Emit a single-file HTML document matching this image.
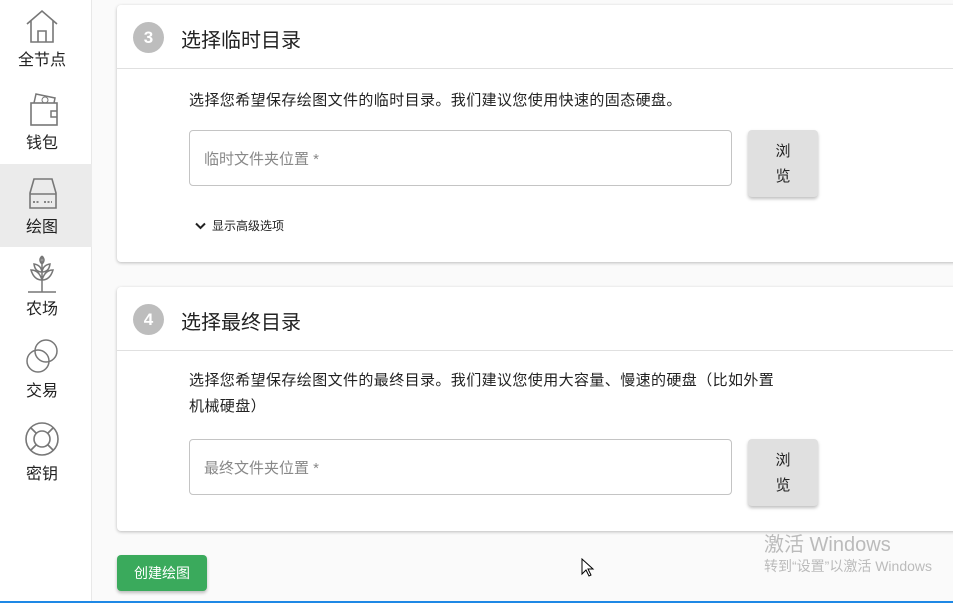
<!DOCTYPE html>
<html><head><meta charset="utf-8"><style>
*{margin:0;padding:0;box-sizing:border-box}
body{width:953px;height:603px;overflow:hidden;background:#fafafa;font-family:"Liberation Sans","Noto Sans CJK SC",sans-serif;color:#333;position:relative}
.side{position:absolute;left:0;top:0;width:92px;height:603px;background:#fff;border-right:1px solid #e8e8e8}
.item{position:absolute;left:0;width:92px;height:83px;text-align:center;font-size:16px;color:#222;padding-right:8px}
.item svg{display:block;margin:0 auto}
.item span{position:absolute;left:0;right:8px}
.card{position:absolute;left:117px;width:850px;background:#fff;border-radius:4px;box-shadow:0 1px 3px rgba(0,0,0,.25)}
.hd{height:64px;border-bottom:1px solid #e0e0e0;position:relative}
.num{position:absolute;left:16px;width:31px;height:31px;border-radius:50%;background:#bdbdbd;color:#fff;font-size:17px;text-align:center;line-height:31px;font-weight:bold}
.ttl{position:absolute;left:64px;font-size:20px;color:#222}
.desc{position:absolute;left:72px;font-size:15px;letter-spacing:0.4px;color:#222;line-height:26px;width:640px;white-space:nowrap}
.inp{position:absolute;left:72px;width:543px;height:56px;border:1px solid #c4c4c4;border-radius:4px;font-size:15px;color:#888;padding:17px 14px}
.btn{position:absolute;left:631px;width:70px;height:67px;background:#e0e0e0;border-radius:4px;box-shadow:0 2px 3px rgba(0,0,0,.25);font-size:15px;text-align:center;color:#222;line-height:25px;padding-top:9px}
</style></head><body>
<div class="side">
 <div class="item" style="top:0;"><svg width="40" height="42" viewBox="0 0 40 42" style="margin-top:4px"><path d="M5 20 L20 7 L35 20 M9 17 V38 H31 V17 M16 38 V27 H24 V38" fill="none" stroke="#777" stroke-width="1.6"/></svg><span style="top:46px">全节点</span></div>
 <div class="item" style="top:83px"><svg width="40" height="40" viewBox="0 0 40 40" style="margin-top:5px"><rect x="9" y="15" width="26" height="22" fill="none" stroke="#777" stroke-width="1.6"/><path d="M12 15 L14 6 L33 10 L32 15" fill="none" stroke="#777" stroke-width="1.5"/><circle cx="23" cy="12" r="3" fill="none" stroke="#777"/><path d="M35 23 H29 V29 H35" fill="none" stroke="#777" stroke-width="1.5"/></svg><span style="top:46px">钱包</span></div>
 <div class="item" style="top:164px;background:#ebebeb"><svg width="40" height="40" viewBox="0 0 40 40" style="margin-top:7px"><path d="M8 22 L12 8 H30 L34 22 V37 H8 Z M8 23 H34" fill="none" stroke="#777" stroke-width="1.6"/><path d="M11 31 H18 M22 31 H30" stroke="#777" stroke-width="1.8" stroke-dasharray="2 1.5"/></svg><span style="top:49px">绘图</span></div>
 <div class="item" style="top:247px"><svg width="40" height="44" viewBox="0 0 40 44" style="margin-top:5px"><path d="M20 40 V4 M20 4 Q24 8 20 12 Q16 8 20 4 M20 28 Q12 28 9 18 Q17 18 20 28 M20 28 Q28 28 31 18 Q23 18 20 28 M20 20 Q13 20 12 12 Q19 13 20 20 M20 20 Q27 20 28 12 Q21 13 20 20 M6 40 H34" fill="none" stroke="#777" stroke-width="1.5"/></svg><span style="top:48px">农场</span></div>
 <div class="item" style="top:331px"><svg width="40" height="40" viewBox="0 0 40 40" style="margin-top:5px"><circle cx="24" cy="15" r="11" fill="none" stroke="#777" stroke-width="1.5"/><circle cx="16" cy="25" r="11" fill="none" stroke="#777" stroke-width="1.5"/></svg><span style="top:46px">交易</span></div>
 <div class="item" style="top:414px"><svg width="40" height="40" viewBox="0 0 40 40" style="margin-top:5px"><circle cx="20" cy="20" r="16" fill="none" stroke="#777" stroke-width="1.6"/><circle cx="20" cy="20" r="8" fill="none" stroke="#777" stroke-width="1.6"/><path d="M9 9 L14 14 M31 9 L26 14 M9 31 L14 26 M31 31 L26 26" stroke="#777" stroke-width="1.6"/></svg><span style="top:46px">密钥</span></div>
</div>

<div class="card" style="top:5px;height:257px">
 <div class="hd"><div class="num" style="top:17px">3</div><div class="ttl" style="top:19px">选择临时目录</div></div>
 <div class="desc" style="top:83px">选择您希望保存绘图文件的临时目录。我们建议您使用快速的固态硬盘。</div>
 <div class="inp" style="top:125px">临时文件夹位置 *</div>
 <div class="btn" style="top:125px">浏<br>览</div>
 <div style="position:absolute;left:78px;top:212px;font-size:12px;color:#222"><svg width="11" height="8" viewBox="0 0 11 8" style="margin-right:6px"><path d="M1 1.5 L5.5 6 L10 1.5" fill="none" stroke="#222" stroke-width="2"/></svg>显示高级选项</div>
</div>

<div class="card" style="top:287px;height:244px">
 <div class="hd"><div class="num" style="top:17px">4</div><div class="ttl" style="top:19px">选择最终目录</div></div>
 <div class="desc" style="top:81px">选择您希望保存绘图文件的最终目录。我们建议您使用大容量、慢速的硬盘（比如外置<br>机械硬盘）</div>
 <div class="inp" style="top:152px">最终文件夹位置 *</div>
 <div class="btn" style="top:152px">浏<br>览</div>
</div>

<div style="position:absolute;left:117px;top:555px;width:90px;height:36px;background:#3aaa5c;border-radius:4px;box-shadow:0 2px 3px rgba(0,0,0,.25);color:#fff;font-size:14px;text-align:center;line-height:36px">创建绘图</div>

<div style="position:absolute;left:764px;top:528px;font-size:20px;color:#bbb">激活 Windows</div>
<div style="position:absolute;left:764px;top:556px;font-size:14px;color:#bbb;white-space:nowrap">转到“设置”以激活 Windows</div>
<svg style="position:absolute;left:581px;top:558px" width="14" height="20" viewBox="0 0 14 20"><path d="M1 1 V16 L5 12 L8 18 L10 17 L7 11 H12 Z" fill="#fff" stroke="#000"/></svg>
<div style="position:absolute;left:0;top:601px;width:953px;height:2px;background:#1e88e5"></div>
</body></html>
